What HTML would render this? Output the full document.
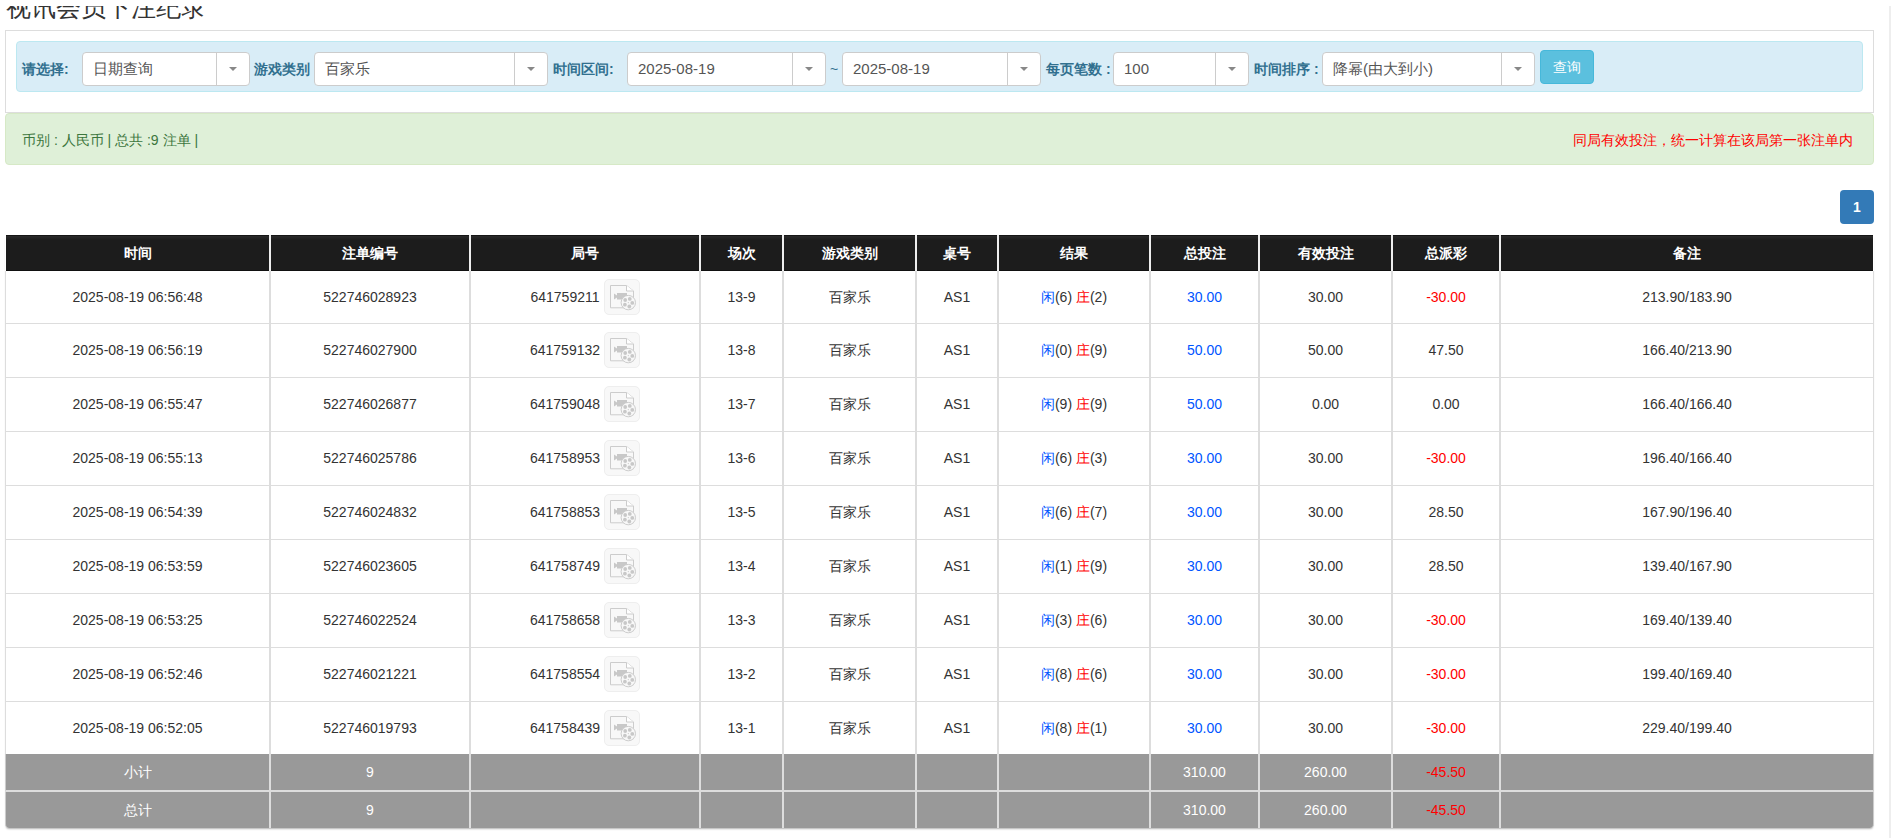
<!DOCTYPE html><html><head><meta charset="utf-8"><title>视讯会员下注纪录</title><style>
*{box-sizing:border-box}
html,body{margin:0;padding:0;background:#fff}
body{width:1891px;height:838px;overflow:hidden;position:relative;font-family:"Liberation Sans",sans-serif;color:#333;font-size:14px}
.title{position:absolute;left:6px;top:-10px;font-size:25px;line-height:34px;color:#333;white-space:nowrap}
.panel{position:absolute;left:5px;top:30px;width:1869px;height:83px;border:1px solid #ddd;background:#fff}
.info{position:absolute;left:16px;top:41px;width:1847px;height:51px;border:1px solid #bce8f1;background:#d9edf7;border-radius:4px}
.lab{position:absolute;top:52px;height:34px;line-height:34px;font-size:14px;font-weight:bold;color:#31708f;white-space:nowrap}
.sel{position:absolute;top:52px;height:34px;border:1px solid #ccc;border-radius:4px;background:#fff}
.sel .tx{position:absolute;left:10px;top:0;line-height:32px;font-size:15px;color:#555;white-space:nowrap}
.sel .dv{position:absolute;right:32px;top:0;bottom:0;width:1px;background:#ccc}
.sel .ar{position:absolute;right:12px;top:14px;width:0;height:0;border-left:4px solid transparent;border-right:4px solid transparent;border-top:4px solid #888}
.tilde{position:absolute;left:830px;top:52px;line-height:34px;font-size:14px;color:#31708f}
.btn{position:absolute;left:1540px;top:50px;width:54px;height:34px;background:#5bc0de;border:1px solid #46b8da;border-radius:4px;color:#fff;font-size:14px;line-height:32px;text-align:center}
.ok{position:absolute;left:5px;top:113px;width:1869px;height:52px;background:#dff0d8;border:1px solid #d6e9c6;border-radius:4px;color:#3c763d;font-size:14px}
.ok .l{position:absolute;left:16px;top:0;line-height:52px;white-space:nowrap}
.ok .r{position:absolute;right:20px;top:0;line-height:52px;color:#f00;white-space:nowrap}
.pg{position:absolute;left:1840px;top:190px;width:34px;height:34px;background:#337ab7;border-radius:4px;color:#fff;font-weight:bold;font-size:14px;line-height:34px;text-align:center}
.rstripe{position:absolute;left:1889px;top:6px;width:2px;height:832px;background:#eee}
table.grid{position:absolute;left:5px;top:235px;width:1869px;border-collapse:separate;border-spacing:0;table-layout:fixed;box-shadow:0 2px 2px -1px rgba(0,0,0,.3);border-radius:0 0 4px 4px}
.grid th{height:36px;background:linear-gradient(#161616 0,#161616 1px,#2a2a2a 1px,#1c1c1c 5px,#1c1c1c 35px,#111 35px);color:#fff;font-weight:bold;font-size:14px;border-left:2px solid #eee;padding:0;text-align:center}
.grid th:first-child{border-left:1px solid #fff}
.grid th:last-child{border-right:1px solid #fff}
.grid td{height:54px;border-left:2px solid #ddd;border-bottom:1px solid #ddd;padding:0;text-align:center;font-size:14px;color:#333;white-space:nowrap}
.grid td:first-child{border-left:1px solid #ddd}
.grid td:last-child{border-right:1px solid #ddd}
.grid tr.r1 td{height:53px}
.grid tr.r9 td{height:52px;border-bottom:0}
.grid tr.sum td{background:#999;color:#fff;height:38px;border-bottom:2px solid #ddd}
.grid tr.sum.s2 td{height:36px;border-bottom:0}
.grid tr.sum td:first-child{border-left:1px solid #ccc}
.grid tr.sum td:last-child{border-right:1px solid #ccc}
.grid tr.s2 td:first-child{border-bottom-left-radius:4px}
.grid tr.s2 td:last-child{border-bottom-right-radius:4px}
.grid td.b,.grid span.b{color:#0055ff}
.grid td.rd,.grid span.rd,.grid tr.sum td.rd{color:#f00}
.jh{display:inline-block;vertical-align:middle}
.vb{display:inline-block;vertical-align:middle;width:36px;height:36px;margin-left:4px;border:1px solid #eee;border-radius:5px;background:#f8f8f8;position:relative;top:0}
.vb svg{position:absolute;left:-1px;top:-1px}
.topcover{position:absolute;left:0;top:0;width:1891px;height:6px;background:#fff;z-index:5}
.grid tbody tr:not(.r1):not(.r9):not(.sum) td{padding-bottom:1px}
.grid td,.grid th{line-height:20px}

</style></head><body>
<svg width="0" height="0" style="position:absolute"><defs><g id="vid">
<path d="M6.5 6.5H22.5L29.5 12V28.8H6.5Z" fill="#f8f8f8" stroke="#ccc" stroke-width="1"/>
<path d="M22.5 6.5V12H29.5" fill="#fff" stroke="#ccc" stroke-width="1"/>
<rect x="13" y="14" width="10" height="6.5" fill="#c8c8c8"/>
<path d="M10 14.5L13 16.5V18.5L10 20.5Z" fill="#c8c8c8"/>
<circle cx="24.3" cy="23.6" r="7.2" fill="#f8f8f8" stroke="#ccc" stroke-width="1"/>
<circle cx="28.3" cy="23.9" r="1.9" fill="#c8c8c8"/>
<circle cx="25.3" cy="27.5" r="1.9" fill="#c8c8c8"/>
<circle cx="20.9" cy="25.7" r="1.9" fill="#c8c8c8"/>
<circle cx="21.2" cy="21.0" r="1.9" fill="#c8c8c8"/>
<circle cx="25.8" cy="19.9" r="1.9" fill="#c8c8c8"/>
<circle cx="24.3" cy="23.6" r="0.6" fill="#c8c8c8"/>
</g></defs></svg>
<div class="title">视讯会员下注纪录</div>
<div class="panel"></div>
<div class="info"></div>
<div class="lab" style="left:22px">请选择:</div>
<div class="sel" style="left:82px;width:168px"><span class="tx">日期查询</span><span class="dv"></span><span class="ar"></span></div>
<div class="lab" style="left:254px">游戏类别</div>
<div class="sel" style="left:314px;width:234px"><span class="tx">百家乐</span><span class="dv"></span><span class="ar"></span></div>
<div class="lab" style="left:553px">时间区间:</div>
<div class="sel" style="left:627px;width:199px"><span class="tx">2025-08-19</span><span class="dv"></span><span class="ar"></span></div>
<div class="tilde">~</div>
<div class="sel" style="left:842px;width:199px"><span class="tx">2025-08-19</span><span class="dv"></span><span class="ar"></span></div>
<div class="lab" style="left:1046px">每页笔数 :</div>
<div class="sel" style="left:1113px;width:136px"><span class="tx">100</span><span class="dv"></span><span class="ar"></span></div>
<div class="lab" style="left:1254px">时间排序 :</div>
<div class="sel" style="left:1322px;width:213px"><span class="tx">降幂(由大到小)</span><span class="dv"></span><span class="ar"></span></div>
<div class="btn">查询</div>
<div class="ok"><span class="l">币别 : 人民币 | 总共 :9 注单 |</span><span class="r">同局有效投注，统一计算在该局第一张注单内</span></div>
<div class="pg">1</div>

<table class="grid"><colgroup>
<col style="width:264px">
<col style="width:200px">
<col style="width:230px">
<col style="width:83px">
<col style="width:133px">
<col style="width:82px">
<col style="width:152px">
<col style="width:109px">
<col style="width:133px">
<col style="width:108px">
<col style="width:375px">
</colgroup><thead><tr>
<th>时间</th>
<th>注单编号</th>
<th>局号</th>
<th>场次</th>
<th>游戏类别</th>
<th>桌号</th>
<th>结果</th>
<th>总投注</th>
<th>有效投注</th>
<th>总派彩</th>
<th>备注</th>
</tr></thead><tbody>
<tr class="r1">
<td>2025-08-19 06:56:48</td><td>522746028923</td>
<td><span class="jh">641759211</span><span class="vb"><svg width="35" height="35"><use href="#vid"/></svg></span></td>
<td>13-9</td><td>百家乐</td><td>AS1</td>
<td><span class="b">闲</span>(6) <span class="rd">庄</span>(2)</td>
<td class="b">30.00</td><td>30.00</td>
<td class="rd">-30.00</td>
<td>213.90/183.90</td></tr>
<tr class="">
<td>2025-08-19 06:56:19</td><td>522746027900</td>
<td><span class="jh">641759132</span><span class="vb"><svg width="35" height="35"><use href="#vid"/></svg></span></td>
<td>13-8</td><td>百家乐</td><td>AS1</td>
<td><span class="b">闲</span>(0) <span class="rd">庄</span>(9)</td>
<td class="b">50.00</td><td>50.00</td>
<td>47.50</td>
<td>166.40/213.90</td></tr>
<tr class="">
<td>2025-08-19 06:55:47</td><td>522746026877</td>
<td><span class="jh">641759048</span><span class="vb"><svg width="35" height="35"><use href="#vid"/></svg></span></td>
<td>13-7</td><td>百家乐</td><td>AS1</td>
<td><span class="b">闲</span>(9) <span class="rd">庄</span>(9)</td>
<td class="b">50.00</td><td>0.00</td>
<td>0.00</td>
<td>166.40/166.40</td></tr>
<tr class="">
<td>2025-08-19 06:55:13</td><td>522746025786</td>
<td><span class="jh">641758953</span><span class="vb"><svg width="35" height="35"><use href="#vid"/></svg></span></td>
<td>13-6</td><td>百家乐</td><td>AS1</td>
<td><span class="b">闲</span>(6) <span class="rd">庄</span>(3)</td>
<td class="b">30.00</td><td>30.00</td>
<td class="rd">-30.00</td>
<td>196.40/166.40</td></tr>
<tr class="">
<td>2025-08-19 06:54:39</td><td>522746024832</td>
<td><span class="jh">641758853</span><span class="vb"><svg width="35" height="35"><use href="#vid"/></svg></span></td>
<td>13-5</td><td>百家乐</td><td>AS1</td>
<td><span class="b">闲</span>(6) <span class="rd">庄</span>(7)</td>
<td class="b">30.00</td><td>30.00</td>
<td>28.50</td>
<td>167.90/196.40</td></tr>
<tr class="">
<td>2025-08-19 06:53:59</td><td>522746023605</td>
<td><span class="jh">641758749</span><span class="vb"><svg width="35" height="35"><use href="#vid"/></svg></span></td>
<td>13-4</td><td>百家乐</td><td>AS1</td>
<td><span class="b">闲</span>(1) <span class="rd">庄</span>(9)</td>
<td class="b">30.00</td><td>30.00</td>
<td>28.50</td>
<td>139.40/167.90</td></tr>
<tr class="">
<td>2025-08-19 06:53:25</td><td>522746022524</td>
<td><span class="jh">641758658</span><span class="vb"><svg width="35" height="35"><use href="#vid"/></svg></span></td>
<td>13-3</td><td>百家乐</td><td>AS1</td>
<td><span class="b">闲</span>(3) <span class="rd">庄</span>(6)</td>
<td class="b">30.00</td><td>30.00</td>
<td class="rd">-30.00</td>
<td>169.40/139.40</td></tr>
<tr class="">
<td>2025-08-19 06:52:46</td><td>522746021221</td>
<td><span class="jh">641758554</span><span class="vb"><svg width="35" height="35"><use href="#vid"/></svg></span></td>
<td>13-2</td><td>百家乐</td><td>AS1</td>
<td><span class="b">闲</span>(8) <span class="rd">庄</span>(6)</td>
<td class="b">30.00</td><td>30.00</td>
<td class="rd">-30.00</td>
<td>199.40/169.40</td></tr>
<tr class="r9">
<td>2025-08-19 06:52:05</td><td>522746019793</td>
<td><span class="jh">641758439</span><span class="vb"><svg width="35" height="35"><use href="#vid"/></svg></span></td>
<td>13-1</td><td>百家乐</td><td>AS1</td>
<td><span class="b">闲</span>(8) <span class="rd">庄</span>(1)</td>
<td class="b">30.00</td><td>30.00</td>
<td class="rd">-30.00</td>
<td>229.40/199.40</td></tr>
<tr class="sum s1"><td>小计</td><td>9</td><td></td><td></td><td></td><td></td><td></td><td>310.00</td><td>260.00</td><td class="rd">-45.50</td><td></td></tr>
<tr class="sum s2"><td>总计</td><td>9</td><td></td><td></td><td></td><td></td><td></td><td>310.00</td><td>260.00</td><td class="rd">-45.50</td><td></td></tr>
</tbody></table>
<div class="rstripe"></div><div class="topcover"></div>
</body></html>
